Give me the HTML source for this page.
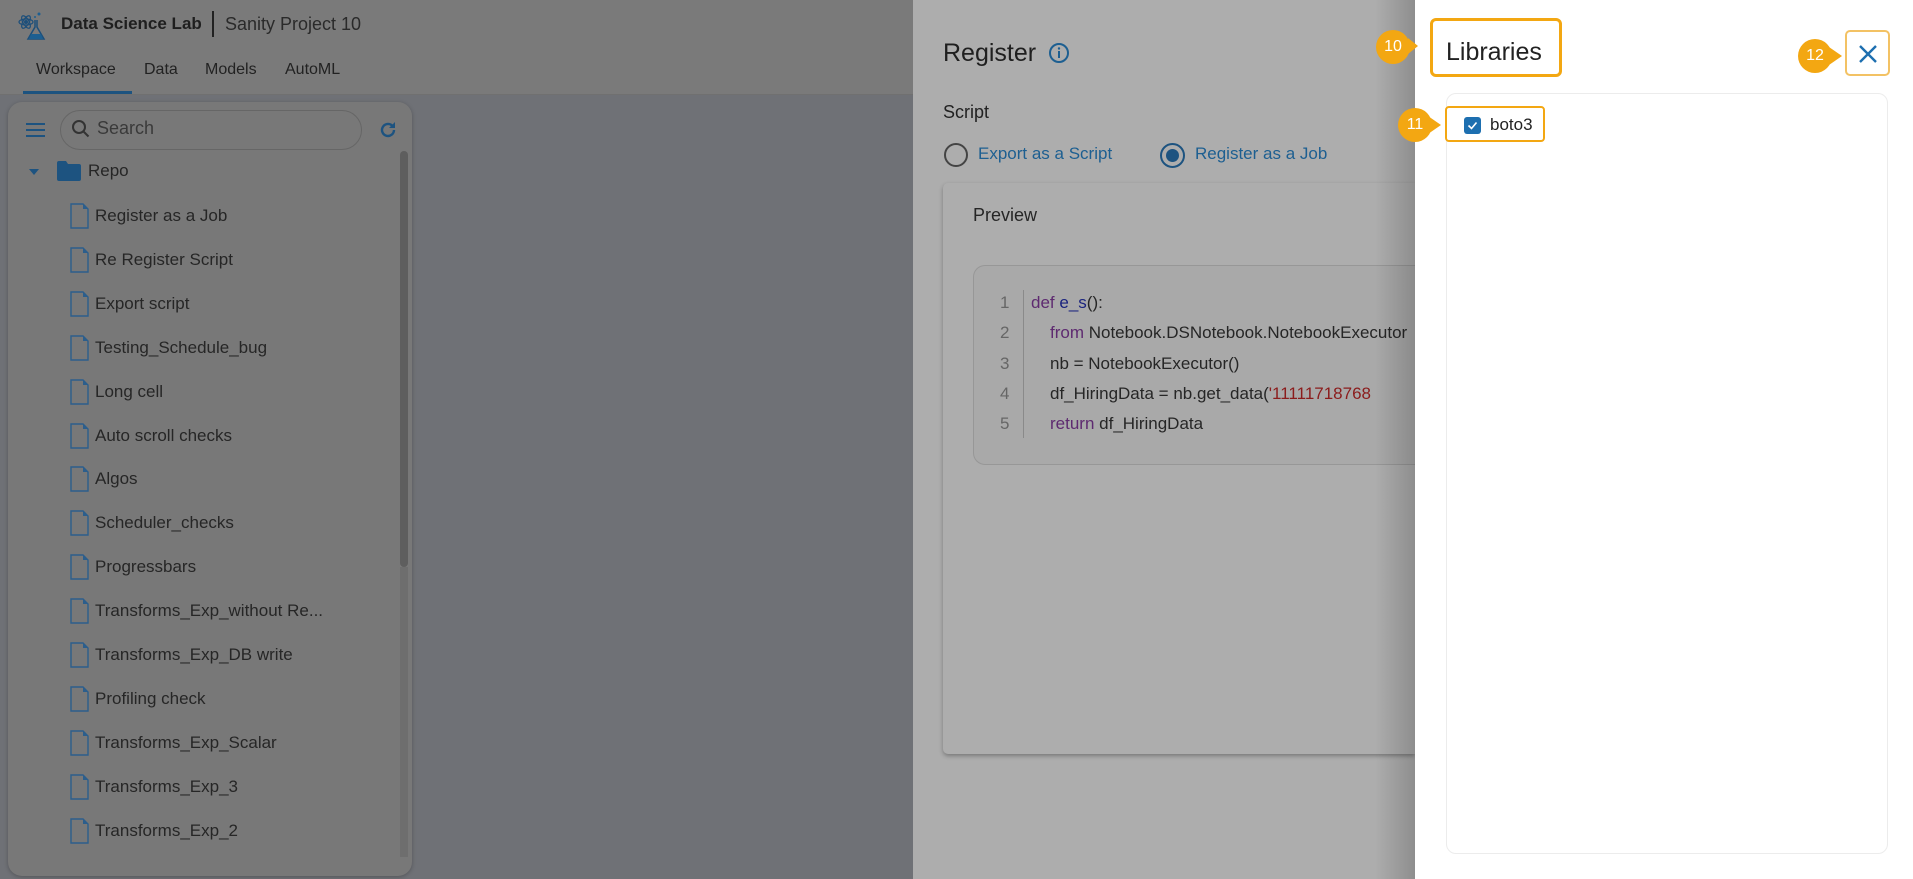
<!DOCTYPE html>
<html><head><meta charset="utf-8">
<style>
*{margin:0;padding:0;box-sizing:border-box}
body{width:1913px;height:879px;overflow:hidden;background:#6f7176;font-family:"Liberation Sans",sans-serif;position:relative;color:#262626}
.abs{position:absolute}
.hdr{left:0;top:0;width:913px;height:95px;background:#7a7a7a;border-bottom:1px solid #707070}
.side{left:8px;top:102px;width:404px;height:774px;background:#787878;border-radius:14px;box-shadow:0 1px 4px rgba(0,0,0,.25)}
.file{position:absolute;left:70px;font-size:17px;color:#262626;height:24px;line-height:24px}
.file svg{position:absolute;left:0;top:-1px}
.file span{position:absolute;left:25px;white-space:nowrap}
.reg{left:913px;top:0;width:502px;height:879px;background:#adadad}
.lib{left:1415px;top:0;width:498px;height:879px;background:#fff}
.badge{position:absolute;width:34px;height:34px;background:#f3a712;border-radius:50%;color:#fff;font-size:16px;text-align:center;line-height:34px}
.code{font-size:17px;position:absolute;white-space:nowrap;color:#262626}
.ln{position:absolute;left:1000px;font-size:17px;color:#666}
</style></head><body>
<div class="abs hdr"></div>
<svg class="abs" style="left:18px;top:10px" width="28" height="32" viewBox="0 0 28 32"><circle cx="8" cy="12" r="2" fill="#1d4f7a"/><ellipse cx="8" cy="12" rx="7" ry="3" fill="none" stroke="#1d4f7a" stroke-width="1.2"/><ellipse cx="8" cy="12" rx="7" ry="3" fill="none" stroke="#1d4f7a" stroke-width="1.2" transform="rotate(60 8 12)"/><ellipse cx="8" cy="12" rx="7" ry="3" fill="none" stroke="#1d4f7a" stroke-width="1.2" transform="rotate(-60 8 12)"/><path d="M17 10v7l-7 12h16l-7-12v-7" fill="none" stroke="#1d4f7a" stroke-width="1.5"/><path d="M13 24h10l2 5H11z" fill="#1d5f91"/><circle cx="21" cy="4" r="1.5" fill="#1d5f91"/><circle cx="17" cy="7" r="1" fill="#1d5f91"/></svg>
<div class="abs" style="left:61px;top:14px;font-size:17px;font-weight:bold;color:#1f1f1f">Data Science Lab</div>
<div class="abs" style="left:212px;top:11px;width:2px;height:26px;background:#222"></div>
<div class="abs" style="left:225px;top:14px;font-size:18px;color:#2a2a2a">Sanity Project 10</div>
<div class="abs" style="left:36px;top:61px;font-size:16px;color:#222">Workspace</div>
<div class="abs" style="left:144px;top:61px;font-size:16px;color:#222">Data</div>
<div class="abs" style="left:205px;top:61px;font-size:16px;color:#222">Models</div>
<div class="abs" style="left:285px;top:61px;font-size:16px;color:#222">AutoML</div>
<div class="abs" style="left:23px;top:91px;width:109px;height:3px;background:#1d5380"></div>

<div class="abs side"></div>
<div class="abs" style="left:26px;top:123px;width:19px;height:2px;background:#1d5380;box-shadow:0 6px 0 #1d5380,0 12px 0 #1d5380"></div>
<div class="abs" style="left:60px;top:110px;width:302px;height:40px;border:1px solid #666;border-radius:20px"></div>
<svg class="abs" style="left:71px;top:119px" width="20" height="20" viewBox="0 0 20 20"><circle cx="8" cy="8" r="6" fill="none" stroke="#333" stroke-width="2"/><path d="M12.5 12.5l5 5" stroke="#333" stroke-width="2"/></svg>
<div class="abs" style="left:97px;top:118px;font-size:18px;color:#3a3a3a">Search</div>
<svg class="abs" style="left:378px;top:120px" width="20" height="20" viewBox="0 0 20 20"><path d="M16 10a6 6 0 1 1-2-4.5" fill="none" stroke="#1d5380" stroke-width="2.4"/><path d="M17 2v6h-6z" fill="#1d5380"/></svg>
<div class="abs" style="left:400px;top:151px;width:8px;height:416px;background:#5e5e5e;border-radius:4px"></div>
<div class="abs" style="left:400px;top:567px;width:8px;height:290px;background:#6e6e6e"></div>
<svg class="abs" style="left:29px;top:169px" width="10" height="6"><path d="M0 0h10L5 6z" fill="#1d5380"/></svg>
<svg class="abs" style="left:57px;top:161px" width="24" height="20" viewBox="0 0 24 20"><path d="M0 2a2 2 0 0 1 2-2h7l2 3h11a2 2 0 0 1 2 2v13a2 2 0 0 1-2 2H2a2 2 0 0 1-2-2z" fill="#1d5380"/></svg>
<div class="abs" style="left:88px;top:161px;font-size:17px">Repo</div>

<div class="file" style="top:204px"><svg width="19" height="26" viewBox="0 0 19 26"><path d="M1 1h12l5 5v19H1z" fill="none" stroke="#2c5e8c" stroke-width="1.4"/><path d="M13 1v5h5" fill="#2c5e8c"/></svg><span>Register as a Job</span></div>
<div class="file" style="top:248px"><svg width="19" height="26" viewBox="0 0 19 26"><path d="M1 1h12l5 5v19H1z" fill="none" stroke="#2c5e8c" stroke-width="1.4"/><path d="M13 1v5h5" fill="#2c5e8c"/></svg><span>Re Register Script</span></div>
<div class="file" style="top:292px"><svg width="19" height="26" viewBox="0 0 19 26"><path d="M1 1h12l5 5v19H1z" fill="none" stroke="#2c5e8c" stroke-width="1.4"/><path d="M13 1v5h5" fill="#2c5e8c"/></svg><span>Export script</span></div>
<div class="file" style="top:336px"><svg width="19" height="26" viewBox="0 0 19 26"><path d="M1 1h12l5 5v19H1z" fill="none" stroke="#2c5e8c" stroke-width="1.4"/><path d="M13 1v5h5" fill="#2c5e8c"/></svg><span>Testing_Schedule_bug</span></div>
<div class="file" style="top:380px"><svg width="19" height="26" viewBox="0 0 19 26"><path d="M1 1h12l5 5v19H1z" fill="none" stroke="#2c5e8c" stroke-width="1.4"/><path d="M13 1v5h5" fill="#2c5e8c"/></svg><span>Long cell</span></div>
<div class="file" style="top:424px"><svg width="19" height="26" viewBox="0 0 19 26"><path d="M1 1h12l5 5v19H1z" fill="none" stroke="#2c5e8c" stroke-width="1.4"/><path d="M13 1v5h5" fill="#2c5e8c"/></svg><span>Auto scroll checks</span></div>
<div class="file" style="top:467px"><svg width="19" height="26" viewBox="0 0 19 26"><path d="M1 1h12l5 5v19H1z" fill="none" stroke="#2c5e8c" stroke-width="1.4"/><path d="M13 1v5h5" fill="#2c5e8c"/></svg><span>Algos</span></div>
<div class="file" style="top:511px"><svg width="19" height="26" viewBox="0 0 19 26"><path d="M1 1h12l5 5v19H1z" fill="none" stroke="#2c5e8c" stroke-width="1.4"/><path d="M13 1v5h5" fill="#2c5e8c"/></svg><span>Scheduler_checks</span></div>
<div class="file" style="top:555px"><svg width="19" height="26" viewBox="0 0 19 26"><path d="M1 1h12l5 5v19H1z" fill="none" stroke="#2c5e8c" stroke-width="1.4"/><path d="M13 1v5h5" fill="#2c5e8c"/></svg><span>Progressbars</span></div>
<div class="file" style="top:599px"><svg width="19" height="26" viewBox="0 0 19 26"><path d="M1 1h12l5 5v19H1z" fill="none" stroke="#2c5e8c" stroke-width="1.4"/><path d="M13 1v5h5" fill="#2c5e8c"/></svg><span>Transforms_Exp_without Re...</span></div>
<div class="file" style="top:643px"><svg width="19" height="26" viewBox="0 0 19 26"><path d="M1 1h12l5 5v19H1z" fill="none" stroke="#2c5e8c" stroke-width="1.4"/><path d="M13 1v5h5" fill="#2c5e8c"/></svg><span>Transforms_Exp_DB write</span></div>
<div class="file" style="top:687px"><svg width="19" height="26" viewBox="0 0 19 26"><path d="M1 1h12l5 5v19H1z" fill="none" stroke="#2c5e8c" stroke-width="1.4"/><path d="M13 1v5h5" fill="#2c5e8c"/></svg><span>Profiling check</span></div>
<div class="file" style="top:731px"><svg width="19" height="26" viewBox="0 0 19 26"><path d="M1 1h12l5 5v19H1z" fill="none" stroke="#2c5e8c" stroke-width="1.4"/><path d="M13 1v5h5" fill="#2c5e8c"/></svg><span>Transforms_Exp_Scalar</span></div>
<div class="file" style="top:775px"><svg width="19" height="26" viewBox="0 0 19 26"><path d="M1 1h12l5 5v19H1z" fill="none" stroke="#2c5e8c" stroke-width="1.4"/><path d="M13 1v5h5" fill="#2c5e8c"/></svg><span>Transforms_Exp_3</span></div>
<div class="file" style="top:819px"><svg width="19" height="26" viewBox="0 0 19 26"><path d="M1 1h12l5 5v19H1z" fill="none" stroke="#2c5e8c" stroke-width="1.4"/><path d="M13 1v5h5" fill="#2c5e8c"/></svg><span>Transforms_Exp_2</span></div>

<div class="abs reg"></div>
<div class="abs" style="left:943px;top:39px;font-size:25px;color:#1f1f1f">Register</div>
<svg class="abs" style="left:1048px;top:42px" width="22" height="22" viewBox="0 0 22 22"><circle cx="11" cy="11" r="9" fill="none" stroke="#1d5f91" stroke-width="2"/><rect x="10" y="9" width="2" height="7" fill="#1d5f91"/><circle cx="11" cy="6.5" r="1.2" fill="#1d5f91"/></svg>
<div class="abs" style="left:943px;top:102px;font-size:18px;color:#222">Script</div>
<div class="abs" style="left:944px;top:143px;width:24px;height:24px;border:2px solid #444;border-radius:50%"></div>
<div class="abs" style="left:978px;top:144px;font-size:17px;color:#1d5f91">Export as a Script</div>
<div class="abs" style="left:1160px;top:143px;width:25px;height:25px;border:2px solid #1d5380;border-radius:50%"></div>
<div class="abs" style="left:1166px;top:149px;width:13px;height:13px;background:#1d5380;border-radius:50%"></div>
<div class="abs" style="left:1195px;top:144px;font-size:17px;color:#1d5f91">Register as a Job</div>
<div class="abs" style="left:943px;top:183px;width:472px;height:571px;background:#adadad;border-radius:5px 0 0 5px;box-shadow:0 2px 4px rgba(0,0,0,.3)"></div>
<div class="abs" style="left:973px;top:205px;font-size:18px;color:#262626">Preview</div>
<div class="abs" style="left:973px;top:265px;width:442px;height:200px;border:1px solid #979797;border-right:none;border-radius:12px 0 0 12px;background:#a9a9a9"></div>
<div class="abs" style="left:1023px;top:290px;width:1px;height:148px;background:#8a8a8a"></div>
<div class="ln" style="top:293px">1</div><div class="ln" style="top:323px">2</div><div class="ln" style="top:354px">3</div><div class="ln" style="top:384px">4</div><div class="ln" style="top:414px">5</div>
<div class="code" style="left:1031px;top:293px"><span style="color:#5e2a70">def</span> <span style="color:#1a237e">e_s</span>():</div>
<div class="code" style="left:1050px;top:323px"><span style="color:#5e2a70">from</span> Notebook.DSNotebook.NotebookExecutor</div>
<div class="code" style="left:1050px;top:354px">nb = NotebookExecutor()</div>
<div class="code" style="left:1050px;top:384px">df_HiringData = nb.get_data(<span style="color:#8b1c1c">'11111718768</span></div>
<div class="code" style="left:1050px;top:414px"><span style="color:#5e2a70">return</span> df_HiringData</div>
<div class="abs" style="left:1375px;top:0;width:40px;height:879px;background:linear-gradient(to right,rgba(0,0,0,0),rgba(0,0,0,.18))"></div>

<div class="abs lib"></div>
<div class="abs" style="left:1430px;top:18px;width:132px;height:59px;border:3px solid #f3a712;border-radius:6px"></div>
<div class="abs" style="left:1446px;top:38px;font-size:25px;color:#222">Libraries</div>
<div class="badge" style="left:1376px;top:30px">10</div>
<svg class="abs" style="left:1408px;top:38px" width="12" height="16"><path d="M0 0l10 8-10 8z" fill="#f3a712"/></svg>
<div class="abs" style="left:1845px;top:30px;width:45px;height:46px;border:2px solid #f3c264;border-radius:5px"></div>
<svg class="abs" style="left:1858px;top:44px" width="20" height="20" viewBox="0 0 20 20"><path d="M2 2l16 16M18 2L2 18" stroke="#1d6fb0" stroke-width="2.4"/></svg>
<div class="badge" style="left:1798px;top:39px">12</div>
<svg class="abs" style="left:1829px;top:47px" width="14" height="18"><path d="M0 0l13 9-13 9z" fill="#f3a712"/></svg>
<div class="abs" style="left:1446px;top:93px;width:442px;height:761px;border:1px solid #ececec;border-radius:10px"></div>
<div class="abs" style="left:1445px;top:106px;width:100px;height:36px;border:2px solid #f3a712;border-radius:4px"></div>
<div class="abs" style="left:1464px;top:117px;width:17px;height:17px;background:#1d6fb0;border-radius:3px"></div>
<svg class="abs" style="left:1466px;top:119px" width="13" height="13" viewBox="0 0 13 13"><path d="M2.5 6.5l3 3 5-6" fill="none" stroke="#fff" stroke-width="1.6"/></svg>
<div class="abs" style="left:1490px;top:115px;font-size:17px;color:#222">boto3</div>
<div class="badge" style="left:1398px;top:108px">11</div>
<svg class="abs" style="left:1428px;top:116px" width="14" height="18"><path d="M0 0l13 9-13 9z" fill="#f3a712"/></svg>
</body></html>
